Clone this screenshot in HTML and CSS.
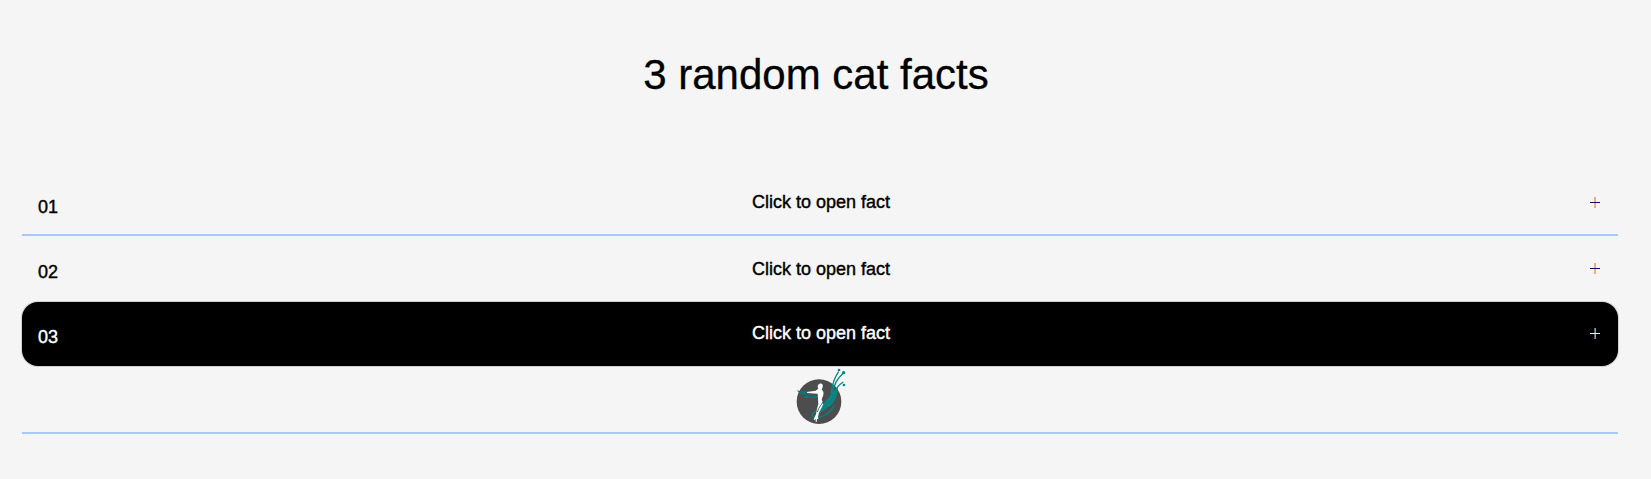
FILE: index.html
```html
<!DOCTYPE html>
<html lang="en">
<head>
<meta charset="utf-8">
<title>3 random cat facts</title>
<link rel="stylesheet" href="styles.css">
</head>
<body>
<main class="page">
  <h1 class="title">3 random cat facts</h1>
  <div class="facts">
    <button class="fact fact-lined" type="button">
      <span class="number">01</span><span class="label">Click to open fact</span>
      <svg class="plus" viewBox="0 0 12 12" aria-hidden="true"><path class="plus-warm" d="M5 0h1v11H5z"/><path class="plus-cool" d="M6 0h1v11H6z"/><path class="plus-bar" d="M1 5h10v1H1z"/></svg>
    </button>
    <button class="fact" type="button">
      <span class="number">02</span><span class="label">Click to open fact</span>
      <svg class="plus" viewBox="0 0 12 12" aria-hidden="true"><path class="plus-warm" d="M5 0h1v11H5z"/><path class="plus-cool" d="M6 0h1v11H6z"/><path class="plus-bar" d="M1 5h10v1H1z"/></svg>
    </button>
    <button class="fact fact-active" type="button">
      <span class="number">03</span><span class="label">Click to open fact</span>
      <svg class="plus" viewBox="0 0 12 12" aria-hidden="true"><path class="plus-warm" d="M5 0h1v11H5z"/><path class="plus-cool" d="M6 0h1v11H6z"/><path class="plus-bar" d="M1 5h10v1H1z"/></svg>
    </button>
  </div>
  <footer class="footer">
    <svg class="logo" viewBox="0 0 240 180" role="img" aria-label="Fairy logo">
      <circle cx="117" cy="107" r="67" fill="#4d4d4d"/>
      <path d="M50 73c12 4 20-1 34 2l32 3v5l-20 1c12 2 19 8 14 12-9 3-20-2-28 1-8 2-14-4-10-8-9-2-15-9-22-16z" fill="#0a7477"/>
      <path d="M72 86c8-3 13 3 22 1s14 3 19 1" fill="none" stroke="#4d4d4d" stroke-width="4"/>
      <path d="M113 145c15-18 17-37 33-49 7-9 10-17 21-26l-1 9 8-5c-5 17-8 29-18 40-9 9-25 19-43 31z" fill="#078888"/>
      <path d="M172 64c-8 39-38 59-62 71-13 7-18 14-10 17 26 8 51-12 63-34" fill="none" stroke="#078080" stroke-width="4"/>
      <path d="M153 83c3-25 11-49 23-66M158 78c4-24 18-44 32-57M166 77c3-12 13-22 24-29" fill="none" stroke="#078888" stroke-width="4"/>
      <circle cx="177" cy="12" r="4" fill="#078888"/><circle cx="191" cy="20" r="5" fill="#078888"/><circle cx="192" cy="57" r="4" fill="#078888"/>
      <path d="M115 68c-4-7-2-13 4-15 8-2 12 6 8 12l-2 6c6 4 6 9 5 16l-5 13 5 15-13 25-3 12 1 8-4-2-1 10-3-1v-9l-3 4-3-2 7-15 3-17 4-14-1-14-1-17-31-2-2-3 27-4z" fill="#fff"/>
      <path d="M129 108c-5 9-13 16-17 30" fill="none" stroke="#078080" stroke-width="3"/>
    </svg>
  </footer>
</main>
</body>
</html>
```
FILE: styles.css
```css
* { box-sizing: border-box; }

body {
  margin: 0;
  background: #f5f5f5;
  color: #000;
  font-family: Arial, "Liberation Sans", sans-serif;
}

.page { padding: 51px 33px 45px 22px; }

.title {
  margin: 0 8px 71px 0;
  font-size: 42px;
  line-height: 48px;
  font-weight: 400;
  text-align: center;
  -webkit-text-stroke: 0.3px currentColor;
}

.fact {
  display: grid;
  grid-template-columns: 64px 1fr 62px;
  align-items: center;
  width: 100%;
  height: 66px;
  padding: 0 16px;
  border: 0;
  background: transparent;
  color: #000;
  font: 400 18px/20px Arial, "Liberation Sans", sans-serif;
  -webkit-text-stroke: 0.4px currentColor;
  cursor: pointer;
}

.fact-lined {
  background: linear-gradient(#a9c8fa, #a9c8fa) bottom / 100% 2px no-repeat;
}

.fact-lined .number { padding-top: 8px; }

.fact-lined .label,
.fact-active .label { padding-bottom: 2px; }

.fact-active {
  height: 64px;
  border-radius: 16px;
  background: #000;
  color: #fff;
  box-shadow: 0 0 0 1px #d0d0d0;
}

.number { padding-top: 6px; text-align: left; }
.label { text-align: center; }

.plus {
  justify-self: end;
  width: 12px;
  height: 12px;
  margin-right: 1px;
  shape-rendering: crispEdges;
}

.plus-warm { fill: #efb08c; }
.plus-cool { fill: #85c4f2; }
.plus-bar { fill: #06106c; }
.fact-active .plus-warm { fill: #4d6682; }
.fact-active .plus-cool { fill: #a88fbd; }
.fact-active .plus-bar { fill: #e4fff9; }

.footer {
  display: flex;
  justify-content: center;
  height: 68px;
  border-bottom: 2px solid #a9c8fa;
}

.logo { width: 80px; height: 60px; }
```
